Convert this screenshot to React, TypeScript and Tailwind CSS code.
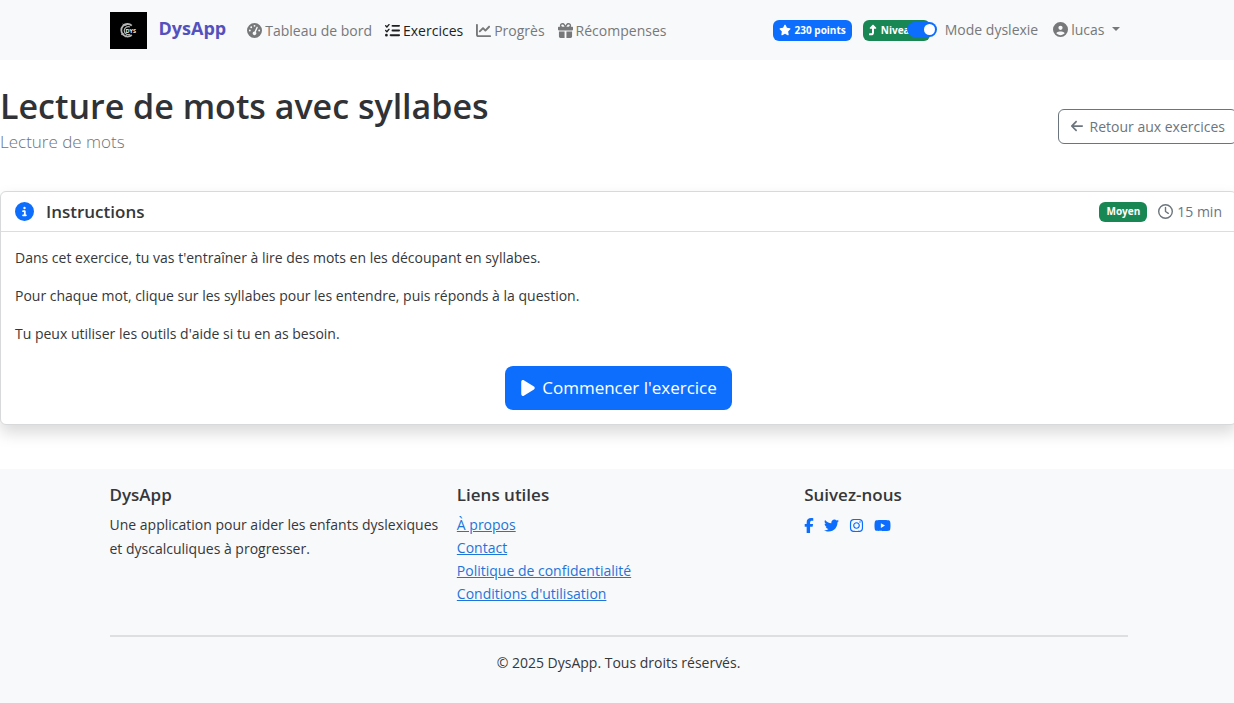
import type { ReactNode } from "react";
import {
  FaArrowLeft,
  FaChartLine,
  FaCircleInfo,
  FaCircleUser,
  FaFacebookF,
  FaGaugeHigh,
  FaGift,
  FaInstagram,
  FaListCheck,
  FaPlay,
  FaRegClock,
  FaStar,
  FaTurnUp,
  FaTwitter,
  FaYoutube,
} from "react-icons/fa6";

function Logo() {
  return (
    <svg viewBox="0 0 37 37" className="h-[37px] w-[37px]" aria-hidden="true">
      <rect width="37" height="37" fill="#000" />
      <g fill="none" stroke="#b5b5b5">
        <path d="M21.8 13.6A6.3 6.3 0 1 0 21.8 23" strokeWidth="1.8" />
        <path d="M20 15A4 4 0 1 0 20 22.2" strokeWidth="1.2" />
        <path d="M12.5 12l4 1.8M11 22.8l3.4-1.6M15.5 25.3l1.3-2.8" strokeWidth="0.8" />
      </g>
      <text x="15.5" y="20.5" fill="#f1f1f1" fontSize="5.5" fontWeight="700" fontFamily="Open Sans, sans-serif">
        DYS
      </text>
    </svg>
  );
}

function NavLink({ icon, children, active }: { icon: ReactNode; children: ReactNode; active?: boolean }) {
  return (
    <a
      href="#"
      aria-current={active ? "page" : undefined}
      className={
        active
          ? "flex items-center gap-[3px] text-[#1d1f21]"
          : "flex items-center gap-[3px] text-[#777879]"
      }
    >
      {icon}
      {children}
    </a>
  );
}

function Header() {
  return (
    <header className="bg-[#f8f9fb]">
      <div className="mx-auto flex h-[60px] max-w-[1042px] items-center px-3">
        <a href="#" className="flex items-center gap-3 text-lg font-bold text-[#5351bd]">
          <Logo />
          <span className="pb-1">DysApp</span>
        </a>
        <nav className="ml-[21px] flex items-center gap-[13px]">
          <NavLink icon={<FaGaugeHigh className="size-[15px]" />}>Tableau de bord</NavLink>
          <NavLink active icon={<FaListCheck className="size-[15px]" />}>Exercices</NavLink>
          <NavLink icon={<FaChartLine className="size-[15px]" />}>Progrès</NavLink>
          <NavLink icon={<FaGift className="size-[15px]" />}>Récompenses</NavLink>
        </nav>
        <div className="ml-auto flex items-center">
          <span className="flex h-[21px] items-center gap-1 rounded-md bg-[#0d6efd] px-1.5 text-[10px] font-bold text-white">
            <FaStar className="size-3" />
            230 points
          </span>
          <span className="ml-[11px] flex h-[21px] w-[67px] items-center gap-1 rounded-md bg-[#198754] px-1.5 text-[10px] font-bold whitespace-nowrap text-white">
            <FaTurnUp className="h-3 w-2 shrink-0" />
            Niveau 3
          </span>
          <label className="relative -mt-0.5 -ml-[23px] flex items-center gap-2 text-[#777879]">
            <input
              type="checkbox"
              role="switch"
              defaultChecked
              className="h-[15px] w-[30px] appearance-none rounded-full bg-[#0d6efd] after:mt-0.5 after:ml-[17px] after:block after:size-[11px] after:rounded-full after:bg-white"
            />
            Mode dyslexie
          </label>
          <button type="button" className="-mt-0.5 mr-2 ml-[15px] flex items-center gap-[3px] text-[#777879]">
            <FaCircleUser className="size-[15px]" />
            lucas
            <svg viewBox="0 0 8 4" className="ml-1 h-1 w-2 fill-current" aria-hidden="true">
              <path d="M0 0h8L4 4z" />
            </svg>
          </button>
        </div>
      </div>
    </header>
  );
}

function Main() {
  return (
    <main className="pt-6 pb-11">
      <div className="mb-[23px] flex items-center justify-between">
        <div className="pb-3">
          <h1 className="text-[34px] leading-11 font-semibold text-[#303235]">Lecture de mots avec syllabes</h1>
          <p className="text-[17px] leading-7 font-light text-[#6c757d]">Lecture de mots</p>
        </div>
        <a
          href="#"
          className="flex h-[35px] items-center gap-1.5 rounded-md border border-[#6c757d] px-[11px] text-[#6c757d]"
        >
          <FaArrowLeft className="size-[14px]" />
          Retour aux exercices
        </a>
      </div>

      <section className="rounded-md border border-[#d8d9da] bg-white shadow-[0_8px_16px_rgba(0,0,0,0.15)]">
        <div className="flex h-10 items-center justify-between border-b border-[#dcddde] px-[14px]">
          <h2 className="flex items-center gap-3 text-[17px] font-semibold text-[#35373a]">
            <FaCircleInfo className="size-[19px] text-[#0d6efd]" />
            Instructions
          </h2>
          <div className="flex items-center gap-[11px]">
            <span className="flex h-5 items-center rounded-md bg-[#198754] px-[7px] text-[10px] font-bold text-white">
              Moyen
            </span>
            <span className="flex items-center gap-1 text-[#6c757d]">
              <FaRegClock className="size-[15px]" />
              15 min
            </span>
          </div>
        </div>
        <div className="p-[14px] leading-6">
          <p className="mb-[14px]">Dans cet exercice, tu vas t'entraîner à lire des mots en les découpant en syllabes.</p>
          <p className="mb-[14px]">
            Pour chaque mot, clique sur les syllabes pour les entendre, puis réponds à la question.
          </p>
          <p className="mb-5">Tu peux utiliser les outils d'aide si tu en as besoin.</p>
          <button
            type="button"
            className="mx-auto flex h-11 items-center gap-1.5 rounded-lg bg-[#0d6efd] px-[15px] text-[17px] text-white"
          >
            <FaPlay className="h-[18px] w-4" />
            Commencer l'exercice
          </button>
        </div>
      </section>
    </main>
  );
}

function FooterTitle({ children }: { children: ReactNode }) {
  return <h2 className="mb-1.5 text-[17px] leading-6 font-semibold text-[#35373a]">{children}</h2>;
}

function Footer() {
  return (
    <footer className="min-h-[234px] bg-[#f8f9fb] pt-[14px] pb-7">
      <div className="mx-auto max-w-[1042px] px-3">
        <div className="grid grid-cols-3 gap-6">
          <div>
            <FooterTitle>DysApp</FooterTitle>
            <p className="leading-6 whitespace-nowrap">
              Une application pour aider les enfants dyslexiques
              <br />
              et dyscalculiques à progresser.
            </p>
          </div>
          <div>
            <FooterTitle>Liens utiles</FooterTitle>
            <ul className="leading-[23px] text-[#1f74d8] underline">
              <li><a href="#">À propos</a></li>
              <li><a href="#">Contact</a></li>
              <li><a href="#">Politique de confidentialité</a></li>
              <li><a href="#">Conditions d'utilisation</a></li>
            </ul>
          </div>
          <div>
            <FooterTitle>Suivez-nous</FooterTitle>
            <div className="flex h-6 items-center text-[#0d6efd]">
              <a href="#" aria-label="Facebook"><FaFacebookF className="h-[15px] w-[10px]" /></a>
              <a href="#" aria-label="Twitter" className="ml-[10px]"><FaTwitter className="size-[15px]" /></a>
              <a href="#" aria-label="Instagram" className="ml-[10px]"><FaInstagram className="size-[15px]" /></a>
              <a href="#" aria-label="YouTube" className="ml-[10px]"><FaYoutube className="h-[15px] w-[17px]" /></a>
            </div>
          </div>
        </div>
        <hr className="mt-[30px] mb-[14px] border-t-2 border-[#dddfe1]" />
        <p className="text-center leading-6">© 2025 DysApp. Tous droits réservés.</p>
      </div>
    </footer>
  );
}

export default function App() {
  return (
    <div className="min-h-screen overflow-x-hidden bg-white font-['Open_Sans','Noto_Sans',sans-serif] text-[14px] text-[#35373a]">
      <div className="-mr-[3px]">
        <Header />
        <Main />
        <Footer />
      </div>
    </div>
  );
}
